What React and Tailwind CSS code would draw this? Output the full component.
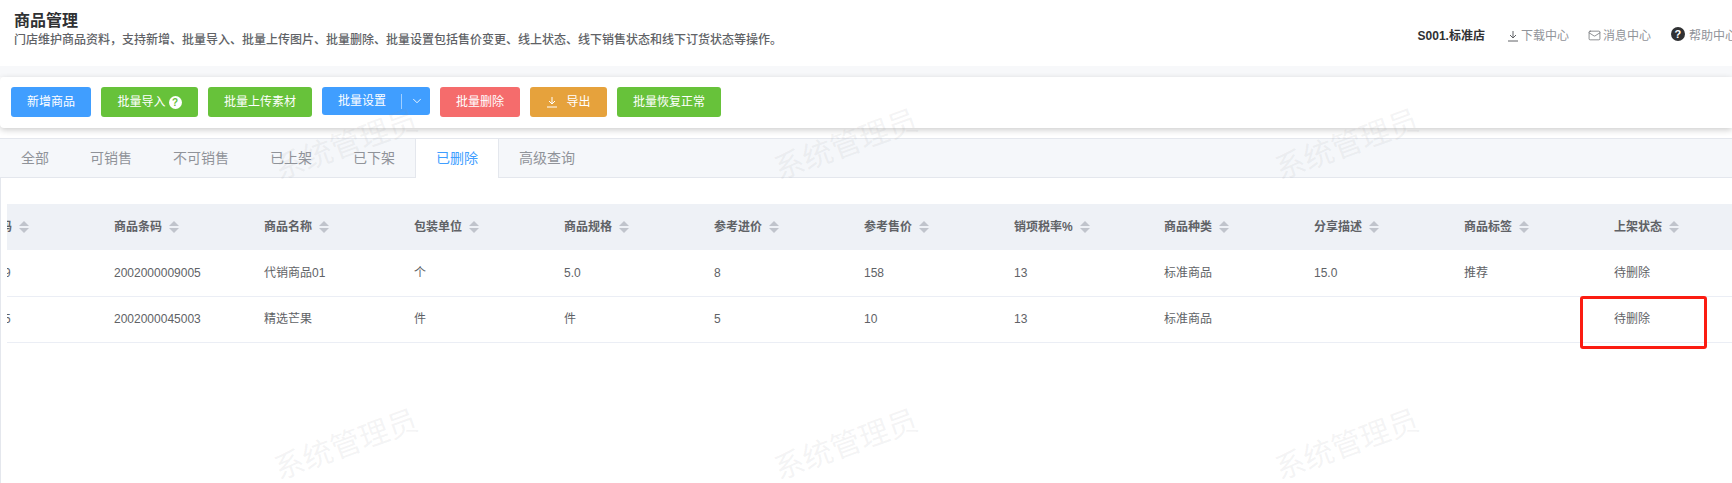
import { ChevronDown, Mail } from "lucide-react";

const FONT = "font-['Liberation_Sans','Noto_Sans_CJK_SC',sans-serif]";

const columns = [
  "商品编码",
  "商品条码",
  "商品名称",
  "包装单位",
  "商品规格",
  "参考进价",
  "参考售价",
  "销项税率%",
  "商品种类",
  "分享描述",
  "商品标签",
  "上架状态",
];

const rows = [
  ["2000009", "2002000009005", "代销商品01", "个", "5.0", "8", "158", "13", "标准商品", "15.0", "推荐", "待删除"],
  ["2000045", "2002000045003", "精选芒果", "件", "件", "5", "10", "13", "标准商品", "", "", "待删除"],
];

const tabs = ["全部", "可销售", "不可销售", "已上架", "已下架", "已删除", "高级查询"];

const watermarks = [
  "left-[271px] top-[127px]",
  "left-[771px] top-[127px]",
  "left-[1272px] top-[127px]",
  "left-[271px] top-[427px]",
  "left-[771px] top-[427px]",
  "left-[1272px] top-[427px]",
];

function SortCaret() {
  return (
    <svg width="10" height="12" viewBox="0 0 10 12" className="mb-[1px] ml-[7px] shrink-0">
      <path d="M5 0 L10 5 L0 5 Z" fill="#c0c4cc" />
      <path d="M5 12 L10 7 L0 7 Z" fill="#c0c4cc" />
    </svg>
  );
}

function DownloadIcon({ color }) {
  return (
    <svg width="12" height="12" viewBox="0 0 12 12" fill="none" stroke={color} strokeWidth="1">
      <path d="M6 1 V7.5 M3 5 L6 8 L9 5 M1 11 H11" />
    </svg>
  );
}

function Btn({ className, children }) {
  return (
    <button className={`flex h-[30px] items-center justify-center rounded-[3px] text-[12px] text-white ${className}`}>
      {children}
    </button>
  );
}

function App() {
  return (
    <div className={`relative h-[483px] w-full overflow-hidden bg-white ${FONT}`}>
      {/* header */}
      <div className="flex h-[66px] items-start justify-between bg-white pl-[14px]">
        <div>
          <h1 className="mt-[11px] text-[16px] font-bold leading-[20px] text-[#303133]">商品管理</h1>
          <p className="mt-[1px] text-[12px] font-medium leading-[16px] text-[#606266]">
            门店维护商品资料，支持新增、批量导入、批量上传图片、批量删除、批量设置包括售价变更、线上状态、线下销售状态和线下订货状态等操作。
          </p>
        </div>
        <div className="mr-[-5px] mt-[27px] flex shrink-0 items-center text-[12px] leading-[16px] text-[#909399]">
          <span className="mr-[22px] font-bold text-[#303133]">S001.标准店</span>
          <DownloadIcon color="#606266" />
          <span className="ml-[2px] mr-[19px]">下载中心</span>
          <Mail size={13} strokeWidth={1.3} color="#606266" />
          <span className="ml-[2px] mr-[20px]">消息中心</span>
          <span className="mb-[3px] flex h-[14px] w-[14px] items-center justify-center rounded-full bg-[#303133] text-[11px] font-bold text-white">
            ?
          </span>
          <span className="ml-[4px]">帮助中心</span>
        </div>
      </div>

      <div className="h-[11px] bg-[#f7f8fa]" />

      {/* toolbar */}
      <div className="relative flex h-[51px] items-start gap-[10px] rounded-l-[4px] bg-white pl-[11px] pt-[10px] shadow-[0_2px_6px_rgba(0,0,0,0.2)]">
        <Btn className="w-[80px] bg-[#409eff]">新增商品</Btn>
        <Btn className="w-[97px] bg-[#67c23a]">
          批量导入
          <span className="ml-[3px] flex h-[13px] w-[13px] items-center justify-center rounded-full bg-white text-[10px] font-bold text-[#67c23a]">
            ?
          </span>
        </Btn>
        <Btn className="w-[104px] bg-[#67c23a]">批量上传素材</Btn>
        <button className="flex h-[28px] w-[108px] items-center rounded-[3px] bg-[#409eff] text-[12px] text-white">
          <span className="ml-[16px] w-[63px] text-left">批量设置</span>
          <span className="h-[15px] w-px bg-[#a0cfff]" />
          <ChevronDown size={14} strokeWidth={1.5} color="#ffffff" className="ml-[8px]" />
        </button>
        <Btn className="w-[80px] bg-[#f56c6c]">批量删除</Btn>
        <Btn className="w-[77px] bg-[#e6a23c]">
          <DownloadIcon color="#ffffff" />
          <span className="ml-[8px]">导出</span>
        </Btn>
        <Btn className="w-[104px] bg-[#67c23a]">批量恢复正常</Btn>
      </div>

      <div className="h-[10px]" />

      {/* tabs */}
      <div className="flex h-[40px] border-y border-[#e4e7ed] bg-[#f5f7fa]">
        {tabs.map((tab) => (
          <div
            key={tab}
            className={
              tab === "已删除"
                ? "mb-[-1px] flex items-center border-l border-[#e4e7ed] bg-white px-[20px] text-[14px] text-[#409eff]"
                : tab === "高级查询"
                  ? "flex items-center border-l border-[#e4e7ed] px-[20px] text-[14px] text-[#909399]"
                  : "flex items-center border-l border-transparent px-[20px] text-[14px] text-[#909399]"
            }
          >
            {tab}
          </div>
        ))}
      </div>

      {/* table */}
      <div className="h-[305px] border-l border-[#e4e7ed] pl-[6px] pt-[26px]">
        <div className="overflow-hidden">
          <table className="ml-[-53px] w-[1800px] max-w-none table-fixed border-collapse text-[12px] text-[#606266]">
            <colgroup>
              {columns.map((col) => (
                <col key={col} className="w-[150px]" />
              ))}
            </colgroup>
            <thead>
              <tr className="h-[46px] bg-[#eef1f6]">
                {columns.map((col) => (
                  <th key={col} className="px-[10px] text-left font-bold">
                    <div className="flex items-center">
                      <span className="whitespace-nowrap">{col}</span>
                      <SortCaret />
                    </div>
                  </th>
                ))}
              </tr>
            </thead>
            <tbody>
              {rows.map((row) => (
                <tr key={row[0]} className="h-[46px] border-b border-[#ebeef5]">
                  {row.map((cell, i) => (
                    <td key={i} className="whitespace-nowrap px-[10px]">
                      {cell}
                    </td>
                  ))}
                </tr>
              ))}
            </tbody>
          </table>
        </div>
      </div>

      {/* red annotation over the cell */}
      <div className="pointer-events-none absolute left-[1580px] top-[296px] h-[53px] w-[127px] rounded-[3px] border-[3px] border-[#fb1c12]" />

      {/* watermark */}
      {watermarks.map((pos) => (
        <div
          key={pos}
          className={`pointer-events-none absolute ${pos} -rotate-[20deg] whitespace-nowrap text-[30px] leading-[36px] text-[#909399]/10`}
        >
          系统管理员
        </div>
      ))}
    </div>
  );
}

export default App;
